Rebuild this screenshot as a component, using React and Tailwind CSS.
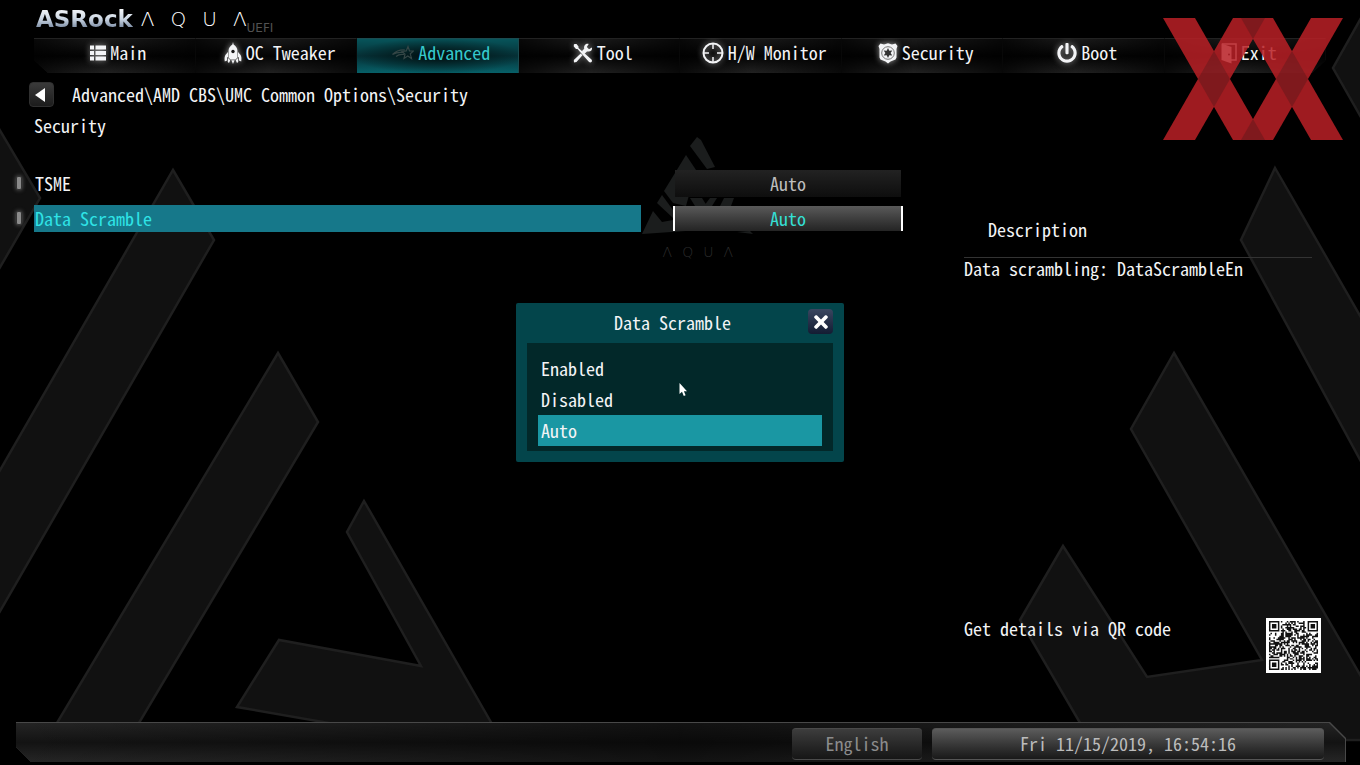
import { useState } from "react";
import { FaPowerOff, FaTimes } from "react-icons/fa";

const iconGlow = "shrink-0 drop-shadow-[0_0_3px_rgba(255,255,255,0.6)]";

const ListIcon = () => (
  <svg width="16" height="16" viewBox="0 0 16 16" fill="currentColor" className={iconGlow}>
    <path d="M0 .5H4V4.500H0ZM5.500 .5H16V4.500H5.500ZM0 6H4V10H0ZM5.500 6H16V10H5.500ZM0 11.500H4V15.500H0ZM5.500 11.500H16V15.500H5.500Z" />
  </svg>
);

const RocketIcon = () => (
  <svg width="18" height="22" viewBox="0 0 18 22" fill="currentColor" className={iconGlow}>
    <path d="M9 0 9.600 2.400C11.800 4 13.400 6 13.400 8.500V15.500L11.500 17.500H6.500L4.600 15.500V8.500C4.600 6 6.200 4 8.400 2.400Z" />
    <path d="M4 10 1.400 13C.4 15 .4 17 .8 19.500L3 18.500V15.500L4 15ZM14 10 16.600 13C17.600 15 17.600 17 17.200 19.500L15 18.500V15.500L14 15Z" />
    <path d="M3.800 16.500H5L6.200 18.500 5 21 3.800 20ZM14.200 16.500H13L11.800 18.500 13 21 14.200 20ZM7.400 18.300H10.600L9 22Z" />
    <circle cx="9" cy="9.500" r="1.700" fill="#161616" />
  </svg>
);

const StarIcon = () => (
  <svg width="22" height="16" viewBox="0 0 22 16" fill="none" stroke="#344646" strokeWidth="1.200" className="shrink-0">
    <path d="M16 1.500 17.500 5.800 21.500 6 18.300 8.800 19.500 13.500 15.800 11 12 13.500 13 9.200 10 6.400 14.200 5.900Z" />
    <path d="M13 5C8 4.500 4 6 .5 9.500 4 7.600 7.500 7 11 7.500M12 9.500C8.500 9 6 9.800 4 11.500" />
  </svg>
);

const ToolIcon = () => (
  <svg width="20" height="20" viewBox="0 0 20 20" className={iconGlow}>
    <path d="M1.500 1 3.500 1 5.500 3.500V5L18.500 16.500C20 18.500 17.700 20.600 15.800 18.800L4.500 6H3L.8 3.500V1.800Z" fill="currentColor" />
    <path d="M18.800 4.500 16 6.200 13.800 4 15.700 1C13 .2 10.500 2.500 11.200 5.700L8.800 8.300 11.300 10.900 14 8.500C17.500 9 19.800 7 18.800 4.500Z" fill="currentColor" />
    <path d="M7.700 10.500 9.500 12.300 3.500 19 1 19.500 .8 17Z" fill="currentColor" />
  </svg>
);

const MonitorIcon = () => (
  <svg width="22" height="22" viewBox="0 0 22 22" fill="none" stroke="currentColor" className={iconGlow}>
    <circle cx="11" cy="11" r="9.500" strokeWidth="2" />
    <path d="M11 2V7M11 15V20M2 11H7M15 11H20" strokeWidth="1.500" />
  </svg>
);

const BadgeIcon = () => (
  <svg width="20" height="21" viewBox="0 0 20 21" className={iconGlow}>
    <path d="M2.500 .5 6 1.500 10 .2 14 1.500 17.500 .5 19.500 3 18.500 6V14.500L17.500 16.500L12.500 18.500 10 20.500 7.500 18.500 2.500 16.500L1.500 14.500V6L.5 3Z" fill="currentColor" />
    <circle cx="10" cy="10" r="6.300" fill="none" stroke="#777" strokeWidth="1" />
    <path d="M10 5 11.300 7.800 14.300 7.500 12.600 10 14.300 12.500 11.300 12.200 10 15 8.700 12.200 5.700 12.500 7.400 10 5.700 7.500 8.700 7.800Z" fill="#333" />
  </svg>
);

const DoorIcon = () => (
  <svg width="16" height="21" viewBox="0 0 16 21" className="shrink-0">
    <path d="M1 1H15V17H10" fill="none" stroke="currentColor" strokeWidth="1.500" />
    <path d="M.5 .5 10.500 4V20.500L.5 17Z" fill="currentColor" />
    <circle cx="8" cy="11.500" r="1" fill="#222" />
  </svg>
);

const tabs = [
  { name: "Main", icon: <ListIcon /> },
  { name: "OC Tweaker", icon: <RocketIcon /> },
  { name: "Advanced", icon: <StarIcon /> },
  { name: "Tool", icon: <ToolIcon /> },
  { name: "H/W Monitor", icon: <MonitorIcon /> },
  { name: "Security", icon: <BadgeIcon /> },
  { name: "Boot", icon: <FaPowerOff size={20} className={iconGlow} /> },
  { name: "Exit", icon: <DoorIcon /> },
];

const settings = [
  { name: "TSME", value: "Auto" },
  { name: "Data Scramble", value: "Auto" },
];

const options = ["Enabled", "Disabled", "Auto"];

const Backdrop = () => (
  <svg
    className="absolute inset-0 h-full w-full"
    viewBox="0 0 1360 765"
    preserveAspectRatio="xMidYMid slice"
    aria-hidden="true"
  >
    <g fill="#111111" stroke="#1f1f1f" strokeWidth="2.500">
      <path d="M-5 122 40 198 -5 276Z" />
      <path d="M173 170 214 240 -5 620V479Z" />
      <path d="M278 353 318 422 130 738H48Z" />
      <path d="M364 501 500 738H415L237 707 279 640 421 666 347 532Z" />
      <path d="M1370 2 1333 68 1370 133Z" />
      <path d="M1275 168 1370 333V478L1241 240Z" />
      <path d="M1174 353 1370 692V740H1090L1020 620 1063 546 1147 677 1262 660 1131 429Z" />
    </g>
    <g fill="#1b1d1d">
      <path d="M697 137 701 140 715 167 707 169 690 146Z" />
      <path d="M686 155 696 170 686 206 673 203 664 191Z" />
      <path d="M662 195 673 210V218L657 203Z" />
      <path d="M653 211 662 222 673 220 700 214V230L642 234Z" />
      <path d="M690 198H702L707 206H695ZM710 198H717L712 206H704ZM724 198H734L731 206H720ZM737 232 750 231 753 234Z" />
    </g>
  </svg>
);

const XXLogo = () => (
  <svg width="180" height="122" viewBox="0 0 180 122" className="pointer-events-none absolute top-[18px] right-[17px] opacity-85" aria-hidden="true">
    <g fill="#ba2026">
      <path d="M0 0H32L102 122H70Z" />
      <path d="M70 0H102L32 122H0Z" />
      <path d="M78 0H110L180 122H148Z" />
      <path d="M148 0H180L110 122H78Z" />
    </g>
    <g fill="#961e23">
      <path d="M51 33 67 61 51 89 35 61Z" />
      <path d="M129 33 145 61 129 89 113 61Z" />
      <path d="M78 0H102L90 21ZM78 122H102L90 101Z" />
    </g>
  </svg>
);

const QR_SIZE = 33;

const isFinder = (x, y) => {
  const ring = (cx, cy) => {
    const d = Math.max(Math.abs(x - cx), Math.abs(y - cy));
    if (d > 4) return null;
    return d === 3 || d < 2;
  };
  const far = QR_SIZE - 4;
  return ring(3, 3) ?? ring(far, 3) ?? ring(3, far);
};

const qrPath = () => {
  let seed = 2019;
  let d = "";
  for (let y = 0; y < QR_SIZE; y++) {
    for (let x = 0; x < QR_SIZE; x++) {
      seed = (seed * 16807) % 2147483647;
      const on = isFinder(x, y) ?? seed % 100 < 52;
      if (on) d += `M${x} ${y}h1v1h-1z`;
    }
  }
  return d;
};

const QRCode = () => (
  <svg width="55" height="55" viewBox="-2 -2 37 37" className="shrink-0 bg-white" role="img" aria-label="QR code">
    <path d={qrPath()} fill="#111" />
  </svg>
);

const App = () => {
  const [tab, setTab] = useState("Advanced");
  const [selected, setSelected] = useState("Data Scramble");
  const [choice, setChoice] = useState("Auto");
  const [open, setOpen] = useState(true);

  return (
    <div className="relative flex min-h-screen flex-col overflow-hidden bg-black font-['Noto_Sans_Mono_CJK_SC','Liberation_Mono',monospace] text-[18px] leading-5 text-gray-100">
      <Backdrop />

      {/* brand */}
      <header className="relative flex h-[38px] items-center pl-9">
        <span className="bg-linear-to-b from-white via-slate-300 to-slate-500 bg-clip-text font-['DejaVu_Sans',sans-serif] text-[23px] leading-6 font-bold text-transparent">
          ASRock
        </span>
        <span className="ml-2 flex gap-4 font-['DejaVu_Sans',sans-serif] text-[20px] font-extralight text-white">
          <span>Λ</span>
          <span>Q</span>
          <span>U</span>
          <span>Λ</span>
        </span>
        <span className="self-end font-['DejaVu_Sans',sans-serif] text-[12px] text-neutral-600">UEFI</span>
      </header>

      <nav className="relative mx-[34px] grid h-[35px] grid-cols-8 [clip-path:polygon(0_0,100%_0,100%_22px,calc(100%-14px)_100%,14px_100%,0_22px)]">
        {tabs.map((t) => (
          <button
            key={t.name}
            onClick={() => setTab(t.name)}
            className={
              tab === t.name
                ? "flex items-center justify-center gap-1 border-t border-r border-[#1b4b50] bg-[radial-gradient(ellipse_at_50%_50%,rgba(0,0,0,0.75),transparent_75%),linear-gradient(#07545a,#053238_50%,#076068)] pb-[6px] pl-2 whitespace-nowrap text-[#35c8cb]"
                : "flex items-center justify-center gap-1 border-t border-r border-t-[#222] border-r-[#080808] bg-[linear-gradient(90deg,rgba(0,0,0,0.7),transparent_45%,rgba(0,0,0,0.7)),linear-gradient(#1b1b1b,#030303_50%,#222)] pb-[6px] pl-2 whitespace-nowrap"
            }
          >
            {t.icon}
            <span className="pb-[2px]">{t.name}</span>
          </button>
        ))}
      </nav>

      <div className="relative mt-[9px] flex items-center gap-[18px] pl-[29px]">
        <button aria-label="Back" className="flex size-[25px] items-center justify-center rounded-sm border border-[#303030] bg-linear-to-b from-[#3a3a3a] to-[#1c1c1c]">
          <svg width="10" height="14" viewBox="0 0 10 14" fill="white" className="mr-1">
            <path d="M10 0V14L0 7Z" />
          </svg>
        </button>
        <p className="pb-[2px]">Advanced\AMD CBS\UMC Common Options\Security</p>
      </div>

      <main className="relative flex flex-1 gap-[61px]">
        <section className="flex-1 pt-2 pl-4">
          <h1 className="pl-[18px]">Security</h1>
          <ul className="mt-[35px] flex flex-col gap-2">
            {settings.map((s) => (
              <li key={s.name} className="flex h-[27px] items-center">
                <span className="mb-px h-[14px] w-[6px] rounded-xs border border-[#333] bg-[#8a8a8a] shadow-[0_0_4px_#666]" />
                <span
                  className={
                    s.name === selected
                      ? "ml-3 flex h-full flex-1 items-center bg-[#16788a] pb-[2px] pl-px text-[#2fe3e6]"
                      : "ml-3 flex h-full flex-1 items-center pb-[2px] pl-px"
                  }
                >
                  {s.name}
                </span>
                <button
                  aria-label={s.name}
                  onClick={() => {
                    setSelected(s.name);
                    setOpen(true);
                  }}
                  className={
                    s.name === selected
                      ? "ml-8 flex h-[25px] w-[230px] items-center justify-center border-x-2 border-white bg-linear-to-b from-[#5a5a5a] to-[#242424] pb-[2px] text-[#35dfd3]"
                      : "ml-8 flex h-[27px] w-[230px] items-center justify-center border-x-2 border-transparent bg-linear-to-b from-[#222] to-[#0e0e0e] bg-clip-padding pb-[2px] text-[#bdbdbd]"
                  }
                >
                  {s.name === "Data Scramble" ? choice : s.value}
                </button>
              </li>
            ))}
          </ul>
          <p className="mt-3 mr-[170px] flex justify-end gap-[10px] font-['DejaVu_Sans',sans-serif] text-[14px] leading-4 font-extralight text-[#2c2c2c]">
            <span>Λ</span>
            <span>Q</span>
            <span>U</span>
            <span>Λ</span>
          </p>
        </section>

        <aside className="mr-[39px] flex w-[357px] flex-col pb-[49px]">
          <h2 className="mr-[9px] border-b border-[#333] pt-28 pb-[18px] pl-6">Description</h2>
          <p>Data scrambling: DataScrambleEn</p>
          <div className="mt-auto flex items-start justify-between">
            <p>Get details via QR code</p>
            <QRCode />
          </div>
        </aside>
      </main>

      <footer className="relative mr-[14px] mb-[3px] ml-4 bg-[#484848] pt-px pr-px [clip-path:polygon(0_0,calc(100%-16px)_0,100%_16px,100%_100%,15px_100%,0_calc(100%-15px))]">
        <div className="flex justify-end gap-[10px] bg-[linear-gradient(90deg,transparent,rgba(0,0,0,0.5)_50%,transparent),linear-gradient(#242424,#131313_50%,#262626)] pt-[5px] pr-[21px] pb-[2px] [clip-path:polygon(0_0,calc(100%-16px)_0,100%_16px,100%_100%,0_100%)]">
          <button className="h-8 w-[130px] rounded-sm border-y border-y-[#4a4a4a] bg-linear-to-b from-[#3d3d3d] to-[#161616] pb-[2px] text-[#8c8c8c]">
            English
          </button>
          <time dateTime="2019-11-15T16:54:16" className="flex h-8 w-[392px] items-center justify-center rounded-sm border-y border-y-[#555] bg-linear-to-b from-[#5c5c5c] to-[#191919] pb-[2px] text-[#bcbcbc]">
            Fri 11/15/2019, 16:54:16
          </time>
        </div>
      </footer>

      <XXLogo />

      {open && (
        <div className="absolute inset-0 flex items-center justify-center">
          <div role="dialog" aria-label="Data Scramble" className="relative w-[328px] rounded-xs bg-[#03454b] px-[11px] pb-[11px]">
            <div className="mb-[3px] flex h-[37px] items-center">
              <h2 className="flex-1 pl-[10px] text-center">Data Scramble</h2>
              <button
                aria-label="Close"
                onClick={() => setOpen(false)}
                className="flex size-[25px] items-center justify-center rounded-sm bg-linear-to-b from-[#3a4660] to-[#131c33] text-white"
              >
                <FaTimes size={20} />
              </button>
            </div>
            <div role="listbox" aria-label="Data Scramble" className="bg-[#022829] px-[11px] pt-[10px] pb-[5px]">
              {options.map((o) => (
                <button
                  key={o}
                  role="option"
                  aria-selected={o === choice}
                  onClick={() => setChoice(o)}
                  className={
                    o === choice
                      ? "flex h-[31px] w-full items-center bg-[#1a97a3] pb-[2px] pl-[3px]"
                      : "flex h-[31px] w-full items-center pb-[2px] pl-[3px]"
                  }
                >
                  {o}
                </button>
              ))}
            </div>
            {/* mouse pointer */}
            <svg width="8" height="14" viewBox="0 0 8 14" className="absolute top-20 left-[163px]">
              <path d="M.5 0V11L3 8.800 4.800 13 6.600 12.200 4.900 8.200H8Z" fill="white" />
            </svg>
          </div>
        </div>
      )}
    </div>
  );
};

export default App;
